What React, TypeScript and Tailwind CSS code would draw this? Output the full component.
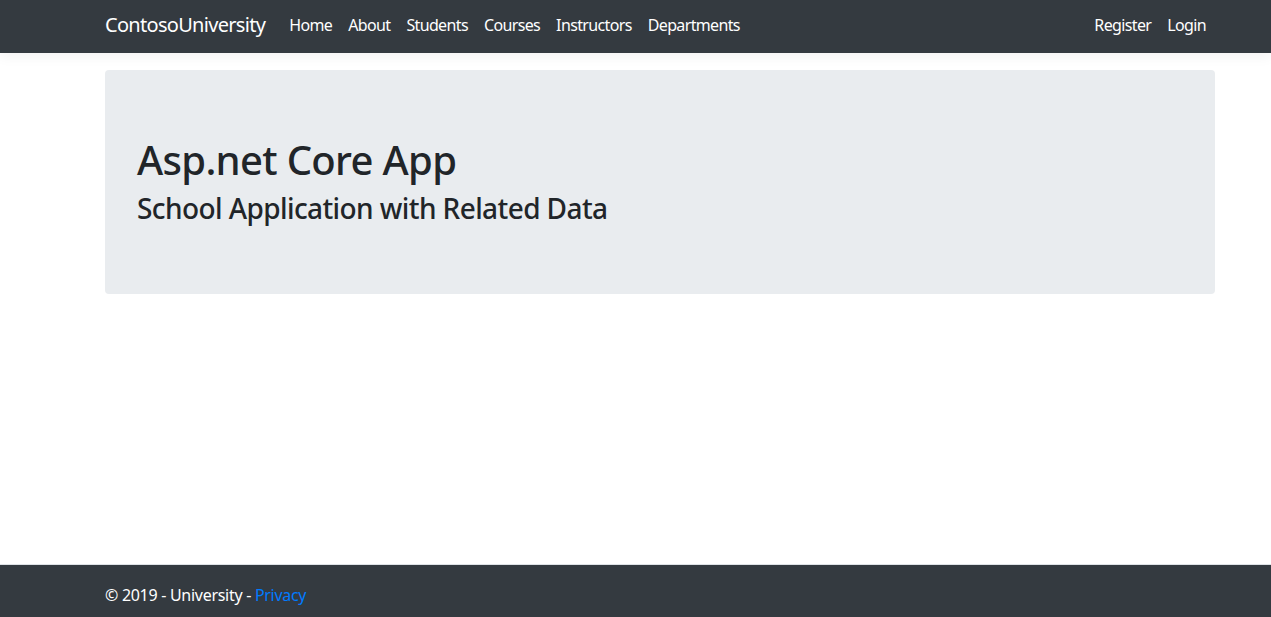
import React from 'react';

const navLinks = ['Home', 'About', 'Students', 'Courses', 'Instructors', 'Departments'];

const font = { fontFamily: '"Segoe UI", "Noto Sans", "Open Sans", Roboto, sans-serif' };

const App = () => {
    return (
        <div className="flex flex-col h-[624px] bg-white text-[#212529]" style={font}>
            <header className="bg-[#343a40] shadow-[0_4px_12px_rgba(0,0,0,0.05)] mb-[17px]">
                <nav className="w-[1140px] ml-[90px] px-[15px] h-[53px] flex items-center pb-[3px]">
                    <a className="text-[20px] text-white mr-4 leading-[30px] tracking-[-0.035em]">ContosoUniversity</a>
                    <ul className="flex flex-1 items-center tracking-[-0.04em]">
                        {navLinks.map((link) => (
                            <li key={link}>
                                <a className="block px-2 py-2 text-[16px] leading-6 text-white">{link}</a>
                            </li>
                        ))}
                    </ul>
                    <ul className="flex items-center tracking-[-0.04em]">
                        <li><a className="block px-2 py-2 text-[16px] leading-6 text-white">Register</a></li>
                        <li><a className="block pl-2 pr-[9px] py-2 text-[16px] leading-6 text-white">Login</a></li>
                    </ul>
                </nav>
            </header>

            <main className="w-[1110px] ml-[105px]">
                <div className="bg-[#e9ecef] rounded-[4px] px-8 pt-16 pb-[60px] mb-8">
                    <h1 className="text-[40px] font-medium leading-[1.2] mb-2 tracking-[-0.017em] pt-[2px]">Asp.net Core App</h1>
                    <h3 className="text-[28px] font-medium leading-[1.2] mb-2 tracking-[-0.021em]">School Application with Related Data</h3>
                </div>
            </main>

            <footer className="mt-auto border-t border-[#dee2e6] bg-[#343a40] text-white h-[60px] leading-[60px] whitespace-nowrap">
                <div className="w-[1110px] ml-[105px] text-[16px] tracking-[-0.018em]">
                    © 2019 - University - <a className="text-[#007bff]">Privacy</a>
                </div>
            </footer>
        </div>
    );
};

export default App;
